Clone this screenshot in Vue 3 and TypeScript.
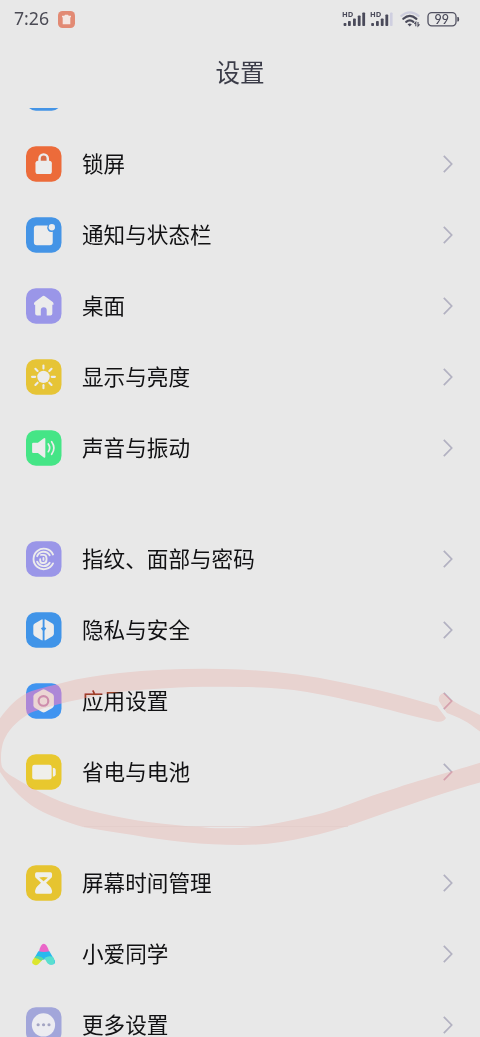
<script setup lang="ts">
interface Row {
  icon: string
  label: string
  color: string
}

const groups: Row[][] = [
  [
    { icon: 'blank', label: '', color: '#4494e6' },
    { icon: 'lock', label: '锁屏', color: '#ec6b3a' },
    { icon: 'notify', label: '通知与状态栏', color: '#4494e6' },
    { icon: 'home', label: '桌面', color: '#9a96e8' },
    { icon: 'sun', label: '显示与亮度', color: '#e6c436' },
    { icon: 'sound', label: '声音与振动', color: '#45e586' },
  ],
  [
    { icon: 'finger', label: '指纹、面部与密码', color: '#9a96e8' },
    { icon: 'privacy', label: '隐私与安全', color: '#4094e8' },
    { icon: 'apps', label: '应用设置', color: '#4094f0' },
    { icon: 'battery', label: '省电与电池', color: '#e8c82e' },
  ],
  [
    { icon: 'timer', label: '屏幕时间管理', color: '#e6c430' },
    { icon: 'ai', label: '小爱同学', color: 'none' },
    { icon: 'more', label: '更多设置', color: '#a2a6da' },
  ],
]

const rays = [0, 45, 90, 135, 180, 225, 270, 315]

const loop =
  'M-2 721C8 707 17 698 27 693C38 688 48 687 62 683C80 678 100 675 120 673C160 669 200 668 240 669.5C274 671 307 675 340 682C376 689 408 697 437 706L446 718C444 722 439 723 430 720C415 717 402 713 390 710C365 704 336 697 307 692C285 688 262 687 240 687C195 686 155 688 120 692C100 694 83 699 67 702C52 706 40 709 30 713C15 722 8 731 4 740C1 747 0 760 2 767C5 773 12 776 20 781C48 798 72 807 100 813C133 821 168 825 200 827C214 829 227 828 240 828C268 826 294 820 323 813C347 806 366 797 390 790C412 782 447 773 482 762L482 782C452 790 424 800 400 808C370 818 340 830 307 837C286 842 264 845 240 845C204 845 167 841 133 835C115 832 98 830 83 827C67 822 56 818 43 812C31 806 24 800 16 792C10 786 4 778 -2 769Z'
const tail =
  'M439 701C438 697 440 694 444 693C450 699 455 702 460 705L482 716L482 733C475 728 469 723 463 720C458 717 452 715 447 713C444 709 442 706 439 701Z'
</script>

<template>
  <main class="phone">
    <header class="top">
      <div class="status">
        <div class="left">
          <span class="clock">7:26</span>
          <svg class="app-badge" viewBox="0 0 17 17">
            <rect width="17" height="17" rx="4.5" fill="#e28a74" />
            <path d="M4 4.8h2.300l.7-1h3l.7 1H13v1.500h-.7v6.900H4.700V6.300H4z" fill="#f4e6e2" />
          </svg>
        </div>
        <svg class="indicators" viewBox="0 0 120 22" fill="#4a4a5a">
          <text x="2" y="8.400" class="hd">HD</text>
          <rect x="3.600" y="14" width="2.800" height="3" rx=".8" />
          <rect x="8" y="12" width="2.8" height="5" rx=".8" />
          <rect x="13" y="9.5" width="2.8" height="7.5" rx=".8" />
          <rect x="17.8" y="6.500" width="2.8" height="10.500" rx=".8" />
          <rect x="22.3" y="3.500" width="2.8" height="13.500" rx=".8" />
          <text x="30" y="8.400" class="hd">HD</text>
          <rect x="31.200" y="14" width="2.800" height="3" rx=".8" />
          <rect x="36" y="12" width="2.8" height="5" rx=".8" />
          <rect x="40.8" y="9.5" width="2.8" height="7.5" rx=".8" />
          <rect x="45.4" y="5.5" width="2.8" height="11.5" rx=".8" />
          <rect x="50" y="3.500" width="2.6" height="13.500" rx=".8" fill="#cfcfe0" />
          <g fill="none" stroke-linecap="round" stroke-width="2.200">
            <path d="M61.3 6.8Q69.7 -0.2 78.6 6.8" stroke="#cdcddd" />
            <path d="M63.3 9.8Q69.8 4 76.4 9.8" stroke="#4a4a5a" />
            <path d="M66.2 12.9Q69.8 9.8 73.4 12.9" stroke="#4a4a5a" />
          </g>
          <path d="M67.6 15.2q2.1-1.6 4.2 0L69.7 17.6z" />
          <path d="M75.800 17.300v-4l-1.500 1.700M78 13v4l1.500-1.700" fill="none" stroke="#4a4a5a" stroke-width="1.100" />
          <rect x="88" y="3.7" width="28" height="13.1" rx="3.8" fill="none" stroke="#505060" stroke-width="1.3" />
          <path d="M117.3 8h.8q1 0 1 2.2t-1 2.2h-.8z" />
          <text x="101.800" y="14.500" class="pct" text-anchor="middle">99</text>
        </svg>
      </div>
      <h1>设置</h1>
    </header>

    <section class="scroll">
      <ul v-for="(group, g) in groups" :key="g" class="group">
        <li v-for="row in group" :key="row.icon" class="row">
          <svg class="icon" viewBox="0 -0.2 36.500 36.500">
            <rect v-if="row.color !== 'none'" width="36" height="36" rx="10" :fill="row.color" />
            <g v-if="row.icon === 'lock'">
              <path d="M13.700 16v-3.500a4.200 4.200 0 0 1 8.400 0V16" fill="#d96e49" stroke="#ececec" stroke-width="2.500" />
              <rect x="9.600" y="14.800" width="16.600" height="13.500" rx="2.600" fill="#ececec" />
            </g>
            <g v-else-if="row.icon === 'notify'">
              <path d="M11 8.5h11.1a4.3 4.3 0 0 0 5 6.3V25.500a3 3 0 0 1-3 3H11a3 3 0 0 1-3-3v-14a3 3 0 0 1 3-3z" fill="#ececec" />
              <circle cx="26.200" cy="10.200" r="3.200" fill="#ececec" />
            </g>
            <path
              v-else-if="row.icon === 'home'"
              d="M16.300 8.300a2.500 2.500 0 0 1 3.200 0l7.600 5.600q1 .8.800 2.200v.8h-1.200v8.700q0 2-2 2h-3.700v-5.200a3 3 0 0 0-6 0v5.200h-3.700q-2 0-2-2v-8.700H8.100v-.8q-.2-1.400.8-2.200z"
              fill="#ececec"
            />
            <g v-else-if="row.icon === 'sun'">
              <circle cx="17.700" cy="17.900" r="6.300" fill="#ececec" />
              <path
                v-for="a in rays"
                :key="a"
                d="M17.700 6.300v3.200"
                stroke="#ececec"
                stroke-width="2.100"
                stroke-linecap="round"
                :transform="`rotate(${a} 17.7 17.9)`"
              />
            </g>
            <g v-else-if="row.icon === 'sound'">
              <path d="M7.200 12.800h4.900l5.600-4.400q1.900-1.300 1.900.6v17.900q0 1.900-1.900.6l-5.600-4.400H7.200q-1 0-1-1v-8.300q0-1 1-1z" fill="#ececec" />
              <path d="M22.600 14q2.800 3.900 0 7.800M26 11.600q4.600 6.400 0 12.800" fill="none" stroke="#ececec" stroke-width="1.700" stroke-linecap="round" />
            </g>
            <g v-else-if="row.icon === 'finger'" fill="none" stroke="#ececec" stroke-width="1.900" stroke-linecap="round">
              <path d="M27.400 13.500A10.400 10.400 0 1 0 27.400 22.500" />
              <path d="M24 14.200A7.100 7.100 0 0 0 11.300 15.200M11.300 20.800A7.100 7.100 0 0 0 24 21.800" />
              <path d="M15.200 13.900h2.200q3.400 0 3.400 3.400v1.400q0 3.400-3.400 3.400h-.4q-2.600 0-2.600-2.600v-1.300" />
              <path d="M17.700 17v2" />
            </g>
            <g v-else-if="row.icon === 'privacy'">
              <path d="M15.900 7.400q1-.5 1 .6v7.300a2.800 2.800 0 0 0-1.800 1.200q1.100.9 1.800 2.200V27.900q0 1.100-1 .6l-7-4.100q-1.500-1-1.500-2.500v-8q0-1.500 1.500-2.500z" fill="#ececec" />
              <path d="M19.800 7.400q-1-.5-1 .6v7.300a2.800 2.800 0 0 1 1.800 1.200q-1.100.9-1.800 2.200V27.900q0 1.100 1 .6l7-4.100q1.500-1 1.500-2.500v-8q0-1.500-1.500-2.500z" fill="#ececec" />
            </g>
            <g v-else-if="row.icon === 'apps'">
              <path d="M16.300 6.600q1.600-.9 3.200 0l7.200 4.200q1.600 1 1.600 2.800v8.700q0 1.800-1.600 2.800l-7.200 4.200q-1.600.9-3.200 0l-7.200-4.200q-1.600-1-1.600-2.800v-8.700q0-1.800 1.600-2.800z" fill="#ececec" />
              <circle cx="17.700" cy="18" r="4.900" fill="none" stroke="#9d9bc0" stroke-width="2.200" />
            </g>
            <g v-else-if="row.icon === 'battery'" fill="#efefeb">
              <rect x="6.300" y="10.700" width="19.700" height="15" rx="2.400" />
              <path d="M27.200 13.800q2.900.2 2.900 2v4.800q0 1.900-2.900 2.200z" />
            </g>
            <g v-else-if="row.icon === 'timer'" fill="#efefeb">
              <path d="M10.800 7.200h14q1.600 0 1.600 1.600v2.100q0 1.300-.9 2.200l-5.100 4.800 3.700 3.500q2.300 2.300 2.300 4.500v1.200q0 1.800-1.600 1.800h-14q-1.600 0-1.600-1.800v-1.200q0-2.200 2.300-4.500l3.700-3.500-5.100-4.800q-.9-.9-.9-2.200V8.800q0-1.600 1.600-1.600z" />
              <path d="M13.400 12.600q4.400-1.200 8.800 0l-4.400 3.600z" fill="#e6c430" />
            </g>
            <g v-else-if="row.icon === 'ai'">
              <path d="M13 15.700Q15 7.700 18 7.700T23.700 16L19 18z" fill="#ea66c8" />
              <path d="M12.500 15.300Q18 16.500 23.700 15.300L29.300 24.800Q30 28.700 26 28.700Q21.700 28.300 21 23L13 24.700L8.700 21.800z" fill="#28b9ee" />
              <path d="M18.600 22.200Q24 18.900 27.800 21.700Q30.900 28.700 25.800 29Q22.500 29 20.800 25.800Z" fill="#5adfcf" />
              <path d="M8.700 21.700Q13.500 19.600 17.600 23.200L12.400 28.500Q9.400 30.500 6.800 28Q5 26.200 8.700 21.700z" fill="#dce62e" />
              <path d="M10.200 20.200Q15 20.200 18 23.200L15.200 25Q12 22 8.700 22.200z" fill="#55d9a6" />
            </g>
            <g v-else-if="row.icon === 'more'">
              <circle cx="17.700" cy="18" r="11.800" fill="#ececf1" />
              <g fill="#a3a4c3">
                <circle cx="12.300" cy="17.800" r="1.600" />
                <circle cx="17.800" cy="17.800" r="1.600" />
                <circle cx="23.300" cy="17.800" r="1.600" />
              </g>
            </g>
          </svg>
          <span class="label">{{ row.label }}</span>
          <svg class="chevron" viewBox="0 0 12 20">
            <path d="M1.800 1.800L9.700 10L1.800 18.200" fill="none" stroke="#b2b1c1" stroke-width="1.700" />
          </svg>
        </li>
      </ul>
    </section>

    <svg class="marker tint" viewBox="0 0 480 1037">
      <path :d="loop" />
      <path :d="tail" />
    </svg>
    <svg class="marker wash" viewBox="0 0 480 1037">
      <path :d="loop" />
      <path :d="tail" />
      <path class="seam" d="M84 826.500H348" />
    </svg>
  </main>
</template>

<style>
body {
  margin: 0;
  background: #e8e8e8;
}
</style>

<style scoped>
.phone {
  position: relative;
  display: flex;
  flex-direction: column;
  width: 480px;
  height: 1037px;
  overflow: hidden;
  background: #e8e8e8;
  font-family: "Noto Sans CJK SC", sans-serif;
  isolation: isolate;
}
.top {
  flex: none;
  height: 108px;
}
.status {
  display: flex;
  align-items: center;
  justify-content: space-between;
  height: 38px;
  padding: 0 20px 0 14px;
}
.left {
  display: flex;
  align-items: center;
  gap: 9px;
}
.clock {
  margin-top: -2px;
  font: 17.700px/20px "Noto Sans", sans-serif;
  color: #4b4b55;
}
.app-badge {
  width: 17px;
  height: 17px;
}
.indicators {
  width: 120px;
  height: 22px;
  margin-top: 1px;
}
.hd {
  font: 700 7.500px "Open Sans", sans-serif;
}
.pct {
  font: 500 12.500px Lato, sans-serif;
}
h1 {
  margin: 15px 0 0;
  font-size: 24.600px;
  font-weight: 400;
  line-height: 36px;
  text-align: center;
  color: #3b3c48;
}
.scroll {
  flex: 1;
  min-height: 0;
  overflow: hidden;
}
.group {
  margin: 0 0 40.700px;
  padding: 0;
  list-style: none;
}
.group:first-child {
  margin-top: -50.100px;
}
.row {
  display: flex;
  align-items: center;
  height: 70.850px;
  padding: 0 26px;
}
.icon {
  flex: none;
  width: 36px;
  height: 36px;
}
.label {
  flex: 1;
  margin-left: 20px;
  padding-bottom: 2px;
  font-size: 21.600px;
  line-height: 30px;
  color: #111113;
}
.chevron {
  flex: none;
  width: 12px;
  height: 20px;
}
.marker {
  position: absolute;
  inset: 0;
  width: 480px;
  height: 1037px;
  pointer-events: none;
}
.tint {
  fill: #e86638;
  mix-blend-mode: lighten;
  opacity: 0.65;
}
.wash {
  fill: #ffe8e5;
  mix-blend-mode: multiply;
}
.seam {
  stroke: #f8dfdb;
  stroke-width: 0.6;
}
</style>
